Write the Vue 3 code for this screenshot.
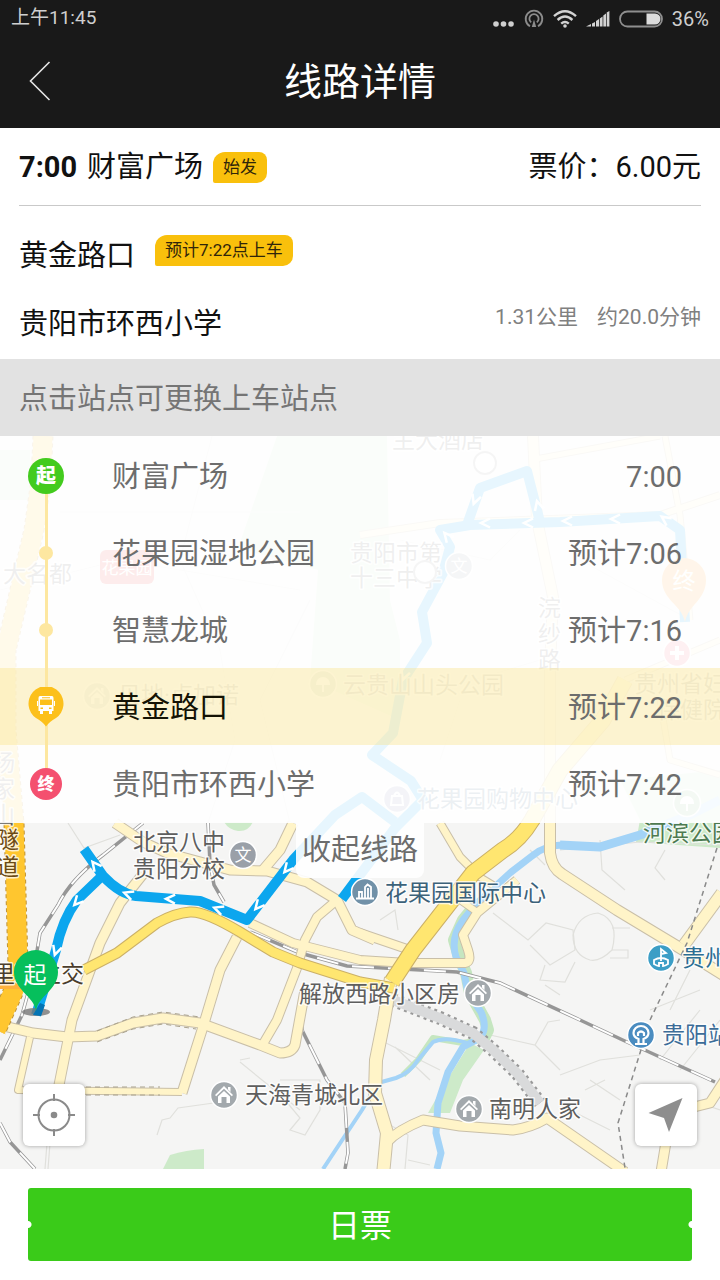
<template>
  <div class="page">
    <header class="top">
      <div class="status-bar">
        <span>上午11:45</span>
        <div class="status-icons">
          <svg width="22" height="20" viewBox="0 0 22 20" fill="#cfcfcf">
            <circle cx="3" cy="15" r="2.8" /><circle cx="10.5" cy="15" r="2.8" /><circle cx="18" cy="15" r="2.8" />
          </svg>
          <svg width="20" height="20" viewBox="0 0 20 20" fill="none" stroke="#8b8b8b" stroke-width="1.8">
            <path d="M6 17.2A8.3 8.3 0 1 1 14 17.2" />
            <path d="M7.2 13.4A4.6 4.6 0 1 1 12.8 13.4" />
            <path d="M10 10.5L12.2 18H7.8Z" fill="#8b8b8b" stroke="none" />
          </svg>
          <svg width="24" height="20" viewBox="0 0 24 20" fill="none" stroke="#d2d2d2" stroke-width="2.4">
            <path d="M1 7.2Q12 -2.8 23 7.2" />
            <path d="M4.6 11Q12 4.2 19.4 11" />
            <path d="M8.2 14.6Q12 11.2 15.8 14.6" />
            <circle cx="12" cy="17" r="1.8" fill="#d2d2d2" stroke="none" />
          </svg>
          <svg width="24" height="20" viewBox="0 0 24 20" fill="#d2d2d2">
            <path d="M0 17.5L5 15V17.5ZM6 14.5L9 13V17.5H6ZM10 12L13 10V17.5H10ZM13.800 9.400L16.600 7.400V17.5H13.800ZM17.300 6.500L20 4.500V17.5H17.300ZM20.700 3.600L23.400 2V17.5H20.700Z" />
          </svg>
          <svg width="44" height="20" viewBox="0 0 44 20">
            <rect x="1" y="2.5" width="42" height="15" rx="7.5" fill="none" stroke="#8f8f8f" stroke-width="1.8" />
            <path d="M27.500 4.500H36A5.500 5.500 0 0 1 36 15.500H27.500Z" fill="#dcdcdc" />
          </svg>
          <span class="battery">36%</span>
        </div>
      </div>
      <div class="nav">
        <button class="back" type="button" aria-label="返回">
          <svg width="22" height="40" viewBox="0 0 22 40" fill="none" stroke="#e6e6e6" stroke-width="1.6">
            <path d="M20.500 1L1.500 20L20.500 39" />
          </svg>
        </button>
        <h1>线路详情</h1>
      </div>
    </header>

    <section class="summary">
      <div class="summary-head">
        <div class="left"><b>7:00</b><span>财富广场</span><em class="tag">始发</em></div>
        <span>票价：6.00元</span>
      </div>
      <div class="summary-row">
        <div class="left wide"><span>黄金路口</span><em class="tag raised">预计7:22点上车</em></div>
      </div>
      <div class="summary-row">
        <span>贵阳市环西小学</span>
        <div class="distance raised"><span>1.31公里</span><span>约20.0分钟</span></div>
      </div>
    </section>

    <p class="hint">点击站点可更换上车站点</p>

    <section class="map-area">
      <svg class="map" viewBox="0 436 720 733" preserveAspectRatio="xMidYMin slice">
        <rect y="436" width="720" height="733" fill="#f5f5f4" />

        <!-- 绿地 -->
        <g fill="#cdeac9">
          <path d="M277 436H387L390 600L400 640V720L310 680L318 570L238 548Z" />
          <path d="M0 450H30V500H0ZM380 500H388V670H380Z" />
          <path d="M163 1169L170 1155Q186 1150 204 1149V1169Z" />
          <path d="M224 822H253Q248 832 238 831Q229 830 224 822Z" />
          <path d="M640 820H720V848L636 842ZM620 780L720 770V820H640Z" />
          <path d="M470 1043L484 1050L463 1080L450 1113H428L444 1085Z" />
        </g>

        <!-- 小路 -->
        <g fill="none" stroke="#e0e0dc" stroke-width="1.200">
          <path v-for="d in lanes" :key="d" :d="d" />
        </g>

        <!-- 河流 -->
        <g fill="none" stroke-linejoin="round">
          <path d="M477 903L463 920L454 940L459 957L466 973L470 993L485 1020L488 1030L482 1042" stroke="#c5e6c0" stroke-width="12" />
          <path d="M480 1040L463 1043L433 1038L418 1060L403 1075" stroke="#c5e6c0" stroke-width="6" />
          <path d="M720 800L690 815L640 835L600 847L560 845" stroke="#a3d3f7" stroke-width="9" />
          <path d="M562 845Q545 845 532 856L510 873L477 903L463 920Q450 938 456 957L464 973L468 993L481 1012Q488 1028 480 1038L463 1047L448 1072L438 1103L436 1133L441 1153L437 1169" stroke="#a3d3f7" stroke-width="7" />
          <path d="M467 1043Q445 1036 433 1042L418 1060Q410 1073 396 1078L378 1083L362 1110L323 1169" stroke="#a3d3f7" stroke-width="4" />
        </g>

        <!-- 铁路 -->
        <g fill="none">
          <path v-for="d in rails" :key="'a' + d" :d="d" stroke="#969696" stroke-width="3.500" />
          <path v-for="d in rails" :key="'b' + d" :d="d" stroke="#fff" stroke-width="2" stroke-dasharray="22 14" />
        </g>
        <path d="M393 1000L440 1018L473 1033L493 1050L517 1073L540 1103" fill="none" stroke="#999" stroke-width="14" stroke-dasharray="3 4" />
        <path d="M393 1000L440 1018L473 1033L493 1050L517 1073L540 1103" fill="none" stroke="#d9dadb" stroke-width="10" />

        <!-- 道路 -->
        <g fill="none" stroke-linejoin="round">
          <path v-for="r in roads" :key="'o' + r.d" :d="r.d" stroke="#c9bfa8" :stroke-width="r.w + 2" />
          <path v-for="r in roads" :key="'f' + r.d" :d="r.d" stroke="#fff4c8" :stroke-width="r.w" />
          <path v-for="r in mains" :key="'m' + r.d" :d="r.d" stroke="#cbb067" :stroke-width="r.w + 2" />
          <path v-for="r in mains" :key="'n' + r.d" :d="r.d" stroke="#ffe670" :stroke-width="r.w" />
          <path :d="highway" stroke="#c09437" stroke-width="21" stroke-dasharray="4 3" />
          <path :d="highway" stroke="#ffc62f" stroke-width="19" />
          <path d="M0 986H24" stroke="#ffb13b" stroke-width="6" />
          <path d="M97 1031L133 1017L163 1012L200 1017M97 1042L133 1029L163 1024L196 1029M86 1087H160M86 1095H160" stroke="#aaa28c" stroke-dasharray="5 4" />
          <path d="M717 848L687 943L650 1020L640 1053L618 1123L625 1168" stroke="#8a8a8a" stroke-width="1.500" stroke-dasharray="5 4" />
        </g>

        <!-- 行车路线 -->
        <g fill="none" stroke="#0ca6ee" stroke-width="10" stroke-linejoin="round">
          <path d="M84 849L103 876Q120 894 136 896L200 901L247 920L293 860L335 815L362 797L395 822" />
          <path d="M103 875L77 900Q62 920 56 950L36 1015" />
          <path d="M342 899L395 828L423 800L411 781L372 755L393 733L403 680L427 643L422 612L443 573L450 547L440 530L470 525L560 522L660 516L680 530L685 622" />
          <path d="M467 525L480 488L527 471L540 522" />
        </g>
        <g fill="none" stroke="#fff" stroke-width="2.500">
          <path v-for="c in chevrons" :key="c.join()" d="M5 -4.500L-4 0L5 4.500" :transform="`translate(${c[0]} ${c[1]}) rotate(${c[2]})`" />
        </g>

        <!-- 地名 -->
        <g class="place">
          <text v-for="p in places" :key="p.t + p.x + p.y" :x="p.x" :y="p.y" :fill="p.c || '#5e5e5e'">{{ p.t }}</text>
        </g>
        <rect x="100" y="550" width="54" height="34" rx="6" fill="#e8403c" />
        <text x="127" y="574" class="metro">花果园</text>

        <!-- 兴趣点 -->
        <g v-for="p in pois" :key="p.x + '-' + p.y" :transform="`translate(${p.x} ${p.y})`">
          <circle r="13.500" :fill="p.c" stroke="#fff" stroke-width="1.500" />
          <path v-if="p.k === 'house'" d="M0 -9L9 0L7.800 1.200L0 -6.200L-7.800 1.200L-9 0ZM4 -8H6.500V-3L4 -5.500ZM0 -4L6 1.500V8H2.500V2H-2.500V8H-6V1.500Z" fill="#fff" />
          <path v-else-if="p.k === 'tower'" d="M0 6V-5L2.500 -7.500L6 -5V6M-6 6V0H-3V6M-9 6.500H9M3 -4V6" fill="none" stroke="#fff" stroke-width="1.800" />
          <path v-else-if="p.k === 'flag'" d="M0 3V-9L5 -5L0 -4M-7 2Q0 -2 7 2V6Q4 8 2 8V5H-2V8Q-4 8 -7 6Z" fill="none" stroke="#fff" stroke-width="1.800" />
          <path v-else-if="p.k === 'station'" d="M-6 9H6M-2.500 8V4Q-7.500 2 -7.500 -2A7.500 7 0 0 1 7.500 -2Q7.500 2 2.500 4V8M-3 1V-2Q0 -5 3 -2V1" fill="none" stroke="#fff" stroke-width="2.200" />
          <path v-else-if="p.k === 'cross'" d="M-7 0H7M0 -7V7" stroke="#fff" stroke-width="4" />
          <path v-else-if="p.k === 'tree'" d="M0 8V0M-6 0A6 6 0 1 1 6 0Z" fill="#fff" stroke="#fff" stroke-width="2" />
          <path v-else-if="p.k === 'bag'" d="M-5 -3H5L6 6H-6ZM-3 -3Q0 -10 3 -3" fill="none" stroke="#fff" stroke-width="2" />
          <text v-else y="6" class="poi-text">文</text>
        </g>
        <g fill="#fff" stroke="#9c9c9c" stroke-width="2"><circle cx="485" cy="463" r="11" /><circle cx="425" cy="572" r="11" /></g>

        <!-- 起终点 -->
        <path d="M685 622C682 605 662 600 662 580A22 22 0 0 1 706 580C706 600 688 605 685 622Z" fill="#ff9d28" />
        <text x="684" y="589" class="pin-text">终</text>
        <ellipse cx="36" cy="1012" rx="14" ry="4" fill="#777" opacity=".8" />
        <path d="M40 1003L33 1015L41 1016L45 1005Z" fill="#0374b4" />
        <path d="M36 1011C34 996 14 990 14 972A22 22 0 0 1 58 972C58 990 38 996 36 1011Z" fill="#06bf5c" />
        <text x="35" y="983" class="pin-text">起</text>
      </svg>

      <div class="stops-panel">
        <ol class="stops">
          <li v-for="(s, i) in stops" :key="s.name">
            <button type="button" :class="['stop', { active: current === i }]" @click="current = i">
              <span :class="['rail', { first: i === 0, last: i === stops.length - 1 }]">
                <span v-if="i === 0" class="mark start">起</span>
                <span v-else-if="i === stops.length - 1" class="mark end">终</span>
                <svg v-else-if="current === i" class="bus" width="36" height="40" viewBox="0 0 36 40">
                  <path d="M18 39.500Q15 35 8 31A17.500 17.500 0 1 1 28 31Q21 35 18 39.500Z" fill="#fcc01b" />
                  <path d="M12 9H24Q25.500 9 25.500 11V24H10.500V11Q10.500 9 12 9ZM12 24H15V27H12ZM21 24H24V27H21ZM9 14H10V19H9ZM26 14H27V19H26Z" fill="#fff" />
                  <path d="M12 12.500H24V18H12ZM14 10.300H22V11.200H14ZM12.500 20.500H15V22H12.500ZM21 20.500H23.500V22H21Z" fill="#fcc01b" />
                </svg>
                <span v-else class="dot"></span>
              </span>
              <span class="name">{{ s.name }}</span>
              <span class="time">{{ s.time }}</span>
            </button>
          </li>
        </ol>
        <button class="collapse" type="button">收起线路</button>
      </div>

      <div class="map-tools">
        <button type="button" aria-label="定位">
          <svg width="44" height="44" viewBox="0 0 44 44" fill="none" stroke="#8a8a8a" stroke-width="2">
            <circle cx="22" cy="22" r="15.500" />
            <path d="M22 1V8M22 36V43M1 22H8M36 22H43" />
            <circle cx="22" cy="22" r="3.300" fill="#8a8a8a" stroke="none" />
          </svg>
        </button>
        <button type="button" aria-label="导航">
          <svg width="44" height="44" viewBox="0 0 44 44" fill="#8e8e8e"><path d="M38.500 5L4.500 20L20 25L25 39Z" /></svg>
        </button>
      </div>
    </section>

    <footer class="footer">
      <button type="button" class="ticket">日票</button>
    </footer>
  </div>
</template>

<script setup>
import { ref } from 'vue'

const current = ref(3)

const stops = [
  { name: '财富广场', time: '7:00' },
  { name: '花果园湿地公园', time: '预计7:06' },
  { name: '智慧龙城', time: '预计7:16' },
  { name: '黄金路口', time: '预计7:22' },
  { name: '贵阳市环西小学', time: '预计7:42' }
]

const highway = 'M43 436L41 480L34 530L20 590L6 650L6 730L14 823L18 965L14 990L-4 1030'

const mains = [
  { d: 'M84 970L117 953L157 923Q175 913 190 912Q205 911 240 932L273 952L300 963L360 982L394 988', w: 9 },
  { d: 'M625 680L603 720L560 770L532 820Q520 840 503 850L473 873L413 950L392 982', w: 15 }
]

const roads = [
  { d: 'M143 874L120 903L100 943L72 1020L58 1090', w: 9 },
  { d: 'M0 1025L33 1033L67 1037L97 1036L133 1023L163 1018L200 1023L260 1045L280 1053Q292 1053 295 1045L305 990', w: 9 },
  { d: 'M337 900L317 917L305 940L297 968L277 1020L263 1044', w: 8 },
  { d: 'M237 937L220 970L202 1030L182 1093', w: 9 },
  { d: 'M30 1037L18 1090L182 1092', w: 6 },
  { d: 'M115 823L143 842L167 853L230 870L267 871L307 882L337 900L352 930L375 940', w: 9 },
  { d: 'M293 823L280 850L263 870', w: 9 },
  { d: 'M250 923L293 943L360 960L407 963H465Q472 962 468 950L463 935L477 913L517 880', w: 8 },
  { d: 'M360 933L407 949', w: 8 },
  { d: 'M473 873L493 885M460 900L477 912', w: 6 },
  { d: 'M391 978L384 1020L376 1060L375 1093L387 1133L383 1175', w: 12 },
  { d: 'M440 823L460 857L473 870', w: 7 },
  { d: 'M533 436L537 520L553 597L550 667V853Q552 868 562 874L617 910L680 948L725 976', w: 10 },
  { d: 'M684 945L722 893', w: 11 },
  { d: 'M387 1142Q398 1130 423 1120L460 1126L513 1130Q530 1128 547 1118L625 1172', w: 9 },
  { d: 'M725 1080L710 1103L690 1108L668 1130L661 1172', w: 9 },
  { d: 'M360 535L440 523L660 515L720 495', w: 6 },
  { d: 'M530 460L660 436M665 436L680 515L690 620', w: 5 },
  { d: 'M625 680L720 640M660 700L670 760L720 775', w: 5 }
]

const rails = [
  'M143 823L103 855Q70 880 58 905L40 933L33 975L22 1015L0 1060',
  'M0 1123L10 1142L35 1169',
  'M250 932L300 953L347 966L457 972L500 983L580 1020L627 1042L715 1082',
  'M208 823L210 863L214 885L224 902',
  'M302 1010V1030L327 1080L345 1103L348 1153L345 1169'
]

const lanes = [
  'M68 823L84 848L120 835', 'M212 436L180 560L220 650L235 740L208 823', 'M310 600L260 700L290 823',
  'M493 913L528 940L546 923L573 930L575 950L550 965L530 945', 'M573 935Q578 915 598 913Q620 920 612 950Q600 962 590 960Q573 955 573 935',
  'M612 928H630M612 950H628V958H610', 'M545 965L540 980L565 982L575 962M560 995L545 985', 'M600 840L602 870L625 890',
  'M665 850L655 868L665 880M530 850L545 865', 'M560 850L640 842L720 845', 'M395 1047L430 1080M380 1040L440 1070',
  'M490 1035L535 1045L548 1022L560 1020M535 1045L560 1070', 'M560 1075L600 1060L640 1055M590 1080L620 1100M570 1110L610 1130M585 1090L605 1080',
  'M660 1060L700 1010M680 1070L720 1020M690 1100L720 1110', 'M157 1135L162 1120L170 1118L178 1108L235 1100M240 1060L250 1058M240 1062L262 1080L300 1110',
  'M280 1080L320 1080V1110L305 1135L290 1130L300 1118L285 1100', 'M405 1169L408 1135L390 1125M408 1160L430 1165',
  'M45 1169L48 1130M48 1169L51 1130', 'M650 1010L700 990M670 1010L690 970M380 920L395 910L398 930',
  'M60 512H300M0 590L120 560L300 590', 'M400 540L490 560L520 530M580 560L690 620', 'M440 690L540 660M440 760L460 700'
]

// x, y, 角度
const chevrons = [
  [95, 865, 52], [128, 894, 20], [170, 899, 2], [218, 909, 20], [258, 906, -50], [287, 869, -50],
  [77, 902, -48], [56, 951, -72], [475, 500, -70], [485, 523, 0], [528, 523, 0], [567, 521, 0],
  [615, 519, 0], [665, 519, 35], [538, 505, 75], [404, 676, -70], [447, 536, 50]
]

const places = [
  { t: '主大酒店', x: 392, y: 448 },
  { t: '大名都', x: 3, y: 582 },
  { t: '贵阳市第', x: 350, y: 561 },
  { t: '十三中学', x: 350, y: 586 },
  { t: '浣', x: 538, y: 616 },
  { t: '纱', x: 538, y: 642 },
  { t: '路', x: 538, y: 668 },
  { t: '贝地·卢加诺', x: 118, y: 703 },
  { t: '云贵山山头公园', x: 343, y: 693 },
  { t: '贵州省妇', x: 634, y: 692 },
  { t: '保健院', x: 657, y: 718 },
  { t: '杨', x: -8, y: 771 },
  { t: '家', x: -8, y: 797 },
  { t: '山', x: -8, y: 823 },
  { t: '花果园购物中心', x: 417, y: 807, c: '#3f6580' },
  { t: '隧', x: -4, y: 848, c: '#6b4a14' },
  { t: '道', x: -4, y: 875, c: '#6b4a14' },
  { t: '北京八中', x: 133, y: 850 },
  { t: '贵阳分校', x: 133, y: 877 },
  { t: '河滨公园', x: 643, y: 841, c: '#4d7a50' },
  { t: '花果园国际中心', x: 385, y: 901, c: '#3c627a' },
  { t: '里冲立交', x: -8, y: 982, c: '#4a3d2c' },
  { t: '解放西路小区房', x: 299, y: 1002 },
  { t: '贵州', x: 682, y: 966, c: '#2c6e94' },
  { t: '贵阳站', x: 662, y: 1043, c: '#3c6c98' },
  { t: '天海青城北区', x: 245, y: 1103 },
  { t: '南明人家', x: 489, y: 1117 }
]

const pois = [
  { k: 'text', x: 243, y: 855, c: '#9aa0a8' },
  { k: 'text', x: 459, y: 566, c: '#9aa0a8' },
  { k: 'tower', x: 365, y: 892, c: '#7191a8' },
  { k: 'flag', x: 661, y: 958, c: '#3c9ec6' },
  { k: 'station', x: 641, y: 1035, c: '#4a8cc0' },
  { k: 'house', x: 478, y: 993, c: '#a3a9ad' },
  { k: 'house', x: 224, y: 1095, c: '#a3a9ad' },
  { k: 'house', x: 469, y: 1109, c: '#a3a9ad' },
  { k: 'house', x: 97, y: 696, c: '#a3a9ad' },
  { k: 'tree', x: 323, y: 684, c: '#8fae8c' },
  { k: 'bag', x: 397, y: 799, c: '#8f93b8' },
  { k: 'tree', x: 687, y: 803, c: '#8fc08c' },
  { k: 'cross', x: 677, y: 653, c: '#ee6a78' }
]
</script>

<style>
body {
  margin: 0;
}
</style>

<style scoped>
.page {
  display: flex;
  flex-direction: column;
  min-height: 100vh;
  background: #fff;
  color: #111;
  font-family: Roboto, "Noto Sans CJK SC", sans-serif;
  font-size: 29px;
  line-height: 1.4;
}

button {
  padding: 0;
  border: 0;
  background: none;
  color: inherit;
  font: inherit;
  cursor: pointer;
}

.top {
  background: #191919;
  color: #cfcfcf;
}

.status-bar {
  display: flex;
  align-items: center;
  justify-content: space-between;
  height: 37px;
  padding: 0 11px;
  font-size: 19px;
}

.status-icons {
  display: flex;
  align-items: center;
  gap: 9px;
}

.battery {
  font-size: 20px;
}

.nav {
  display: grid;
  grid-template-columns: 60px 1fr 60px;
  align-items: center;
  height: 91px;
  padding: 0 20px 4px;
  box-sizing: border-box;
}

.back {
  display: flex;
  padding-left: 9px;
}

h1 {
  margin: 0;
  padding-top: 2px;
  color: #fff;
  font-size: 38px;
  font-weight: 400;
  line-height: 56px;
  text-align: center;
}

.summary {
  padding: 0 19px 1px;
}

.summary-head,
.summary-row {
  display: flex;
  align-items: center;
  justify-content: space-between;
  height: 68px;
}

.summary-head {
  height: 75px;
  margin-bottom: 16px;
  padding-top: 2px;
  border-bottom: 1px solid #c9c9c9;
}

.left {
  display: flex;
  align-items: center;
  gap: 10px;
}

.left.wide {
  gap: 20px;
}

.tag {
  padding: 0 10px;
  border-radius: 12px 8px 10px 2px;
  background: #f9c00c;
  color: #30250a;
  font-size: 17px;
  font-style: normal;
  line-height: 31px;
}

.raised {
  margin-bottom: 12px;
}

.distance {
  display: flex;
  gap: 19px;
  color: #808080;
  font-size: 21px;
}

.hint {
  margin: 0;
  padding: 4px 19px 0;
  background: #e2e2e2;
  color: #757575;
  line-height: 73px;
}

.map-area {
  position: relative;
  display: flex;
  flex: 1;
  flex-direction: column;
  justify-content: space-between;
  overflow: hidden;
}

.map {
  position: absolute;
  inset: 0;
  width: 100%;
  height: 100%;
}

.place {
  font-size: 23px;
  paint-order: stroke;
  stroke: #fff;
  stroke-opacity: .75;
  stroke-width: 3px;
  stroke-linejoin: round;
}

.metro,
.poi-text,
.pin-text {
  fill: #fff;
  font-size: 17px;
  text-anchor: middle;
}

.pin-text {
  font-size: 23px;
}

.stops-panel {
  position: relative;
  display: flex;
  flex-direction: column;
  align-items: center;
}

.stops {
  width: 100%;
  margin: 0;
  padding: 1px 0;
  background: rgba(255, 255, 255, .9);
  list-style: none;
}

.stop {
  display: flex;
  align-items: center;
  width: 100%;
  height: 77px;
  padding: 0 38px 0 28px;
  color: #6d6d6d;
  text-align: left;
}

.stop.active {
  background: rgba(250, 224, 120, .34);
}

.active .name {
  color: #141204;
}

.name,
.time {
  padding-top: 3px;
}

.name {
  flex: 1;
  margin-left: 48px;
}

.rail {
  display: flex;
  align-items: center;
  align-self: stretch;
  justify-content: center;
  width: 36px;
  background: linear-gradient(#fde7a0, #fde7a0) center / 3px 100% no-repeat;
}

.rail.first {
  background-position: bottom;
  background-size: 3px 50%;
}

.rail.last {
  background-position: top;
  background-size: 3px 50%;
}

.mark {
  width: 36px;
  border-radius: 50%;
  background: #43cb1e;
  color: #fff;
  font-size: 20px;
  font-weight: 900;
  line-height: 36px;
  text-align: center;
}

.mark.end {
  width: 32px;
  background: #f4506f;
  font-size: 17px;
  line-height: 32px;
}

.dot {
  width: 14px;
  height: 14px;
  border-radius: 50%;
  background: #fde7a0;
}

.collapse {
  padding: 0 6px;
  border-radius: 0 0 8px 8px;
  background: rgba(255, 255, 255, .9);
  color: #6d6d6d;
  line-height: 55px;
}

.map-tools {
  position: relative;
  display: flex;
  justify-content: space-between;
  padding: 23px;
}

.map-tools button {
  display: flex;
  align-items: center;
  justify-content: center;
  width: 62px;
  height: 62px;
  border-radius: 6px;
  background: #fff;
  box-shadow: 0 0 4px rgba(0, 0, 0, .35);
}

.footer {
  padding: 19px 28px;
  background: #fff;
}

/* 两侧的小缺口 */
.ticket {
  display: block;
  width: 100%;
  padding-top: 4px;
  border-radius: 3px;
  background:
    radial-gradient(circle at 0 50%, #fff 3px, transparent 4px),
    radial-gradient(circle at 100% 50%, #fff 3px, transparent 4px),
    #3acb19;
  color: #fff;
  font-size: 32px;
  line-height: 69px;
}
</style>
